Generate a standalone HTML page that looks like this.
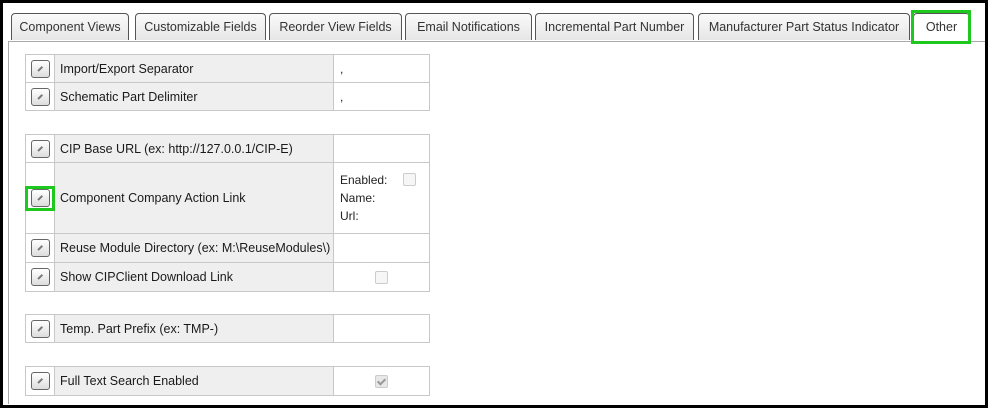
<!DOCTYPE html>
<html><head><style>
body{margin:0;width:988px;height:408px;overflow:hidden;background:#fff;font-family:"Liberation Sans",sans-serif;font-size:12px;color:#222}
.frame{position:absolute;left:0;top:0;width:982px;height:402px;border:3px solid #000;z-index:5}
.panel{position:absolute;left:8px;top:41px;width:980px;height:362px;border-left:1px solid #aaa;border-top:1px solid #aaa}
.tab{position:absolute;top:13px;height:27px;border:1px solid #555;border-bottom:none;border-radius:4px 4px 0 0;background:linear-gradient(#fafafa,#e6e6e6);text-align:center;line-height:27px;font-size:12.5px;color:#333;box-sizing:border-box}
.tab.act{background:#fff;height:29px}
.sel{position:absolute;border:3px solid #1ec81e;box-sizing:border-box}
table{position:absolute;left:25px;width:405px;border-collapse:collapse}
td{border:1px solid #c8c8c8;padding:0;box-sizing:border-box}
td.i{width:29px;text-align:center;background:#fff}
td.l{width:279px;background:#efefef;padding-left:5px;font-size:12.5px;color:#1a1a1a}
td.v{background:#fff;padding-left:6px}
.btn{display:inline-block;width:17px;height:16px;border:1px solid #666;border-radius:3px;background:linear-gradient(#fff,#ddd);vertical-align:middle;position:relative}
.btn:after{content:"";position:absolute;left:5px;top:7px;width:6px;height:1.5px;background:#777;transform:rotate(-45deg)}
.cb{display:inline-block;width:11px;height:11px;border:1px solid #ccc;border-radius:2px;background:#f6f6f6;vertical-align:middle;position:relative}
.cb.ck:after{content:"";position:absolute;left:3px;top:1px;width:3px;height:6px;border:solid #999;border-width:0 2px 2px 0;transform:rotate(45deg)}
</style></head><body>
<div class="frame"></div>
<div class="panel"></div>
<div class="tab" style="left:11px;width:118px">Component Views</div>
<div class="tab" style="left:135px;width:131px">Customizable Fields</div>
<div class="tab" style="left:269px;width:133px">Reorder View Fields</div>
<div class="tab" style="left:405px;width:127px">Email Notifications</div>
<div class="tab" style="left:535px;width:159px">Incremental Part Number</div>
<div class="tab" style="left:698px;width:212px">Manufacturer Part Status Indicator</div>
<div class="tab act" style="left:913px;width:57px">Other</div>
<div class="sel" style="left:911px;top:10px;width:60px;height:34px"></div>

<table style="top:54px">
<tr style="height:28px"><td class="i"><span class="btn"></span></td><td class="l">Import/Export Separator</td><td class="v">,</td></tr>
<tr style="height:28px"><td class="i"><span class="btn"></span></td><td class="l">Schematic Part Delimiter</td><td class="v">,</td></tr>
</table>
<table style="top:134px">
<tr style="height:28px"><td class="i"><span class="btn"></span></td><td class="l">CIP Base URL (ex: http://127.0.0.1/CIP-E)</td><td class="v"></td></tr>
<tr style="height:71px"><td class="i"><span class="btn"></span></td><td class="l">Component Company Action Link</td><td class="v" style="line-height:18px;vertical-align:middle">Enabled: <span class="cb" style="margin-left:12px;vertical-align:top;margin-top:2px"></span><br>Name:<br>Url:</td></tr>
<tr style="height:29px"><td class="i"><span class="btn"></span></td><td class="l">Reuse Module Directory (ex: M:\ReuseModules\)</td><td class="v"></td></tr>
<tr style="height:29px"><td class="i"><span class="btn"></span></td><td class="l">Show CIPClient Download Link</td><td class="v" style="text-align:center;padding:0"><span class="cb"></span></td></tr>
</table>
<div class="sel" style="left:25px;top:186px;width:30px;height:25px"></div>
<table style="top:314px">
<tr style="height:28px"><td class="i"><span class="btn"></span></td><td class="l">Temp. Part Prefix (ex: TMP-)</td><td class="v"></td></tr>
</table>
<table style="top:366px">
<tr style="height:29px"><td class="i"><span class="btn"></span></td><td class="l">Full Text Search Enabled</td><td class="v" style="text-align:center;padding:0"><span class="cb ck" style="background:#e8e8e8"></span></td></tr>
</table>
</body></html>
